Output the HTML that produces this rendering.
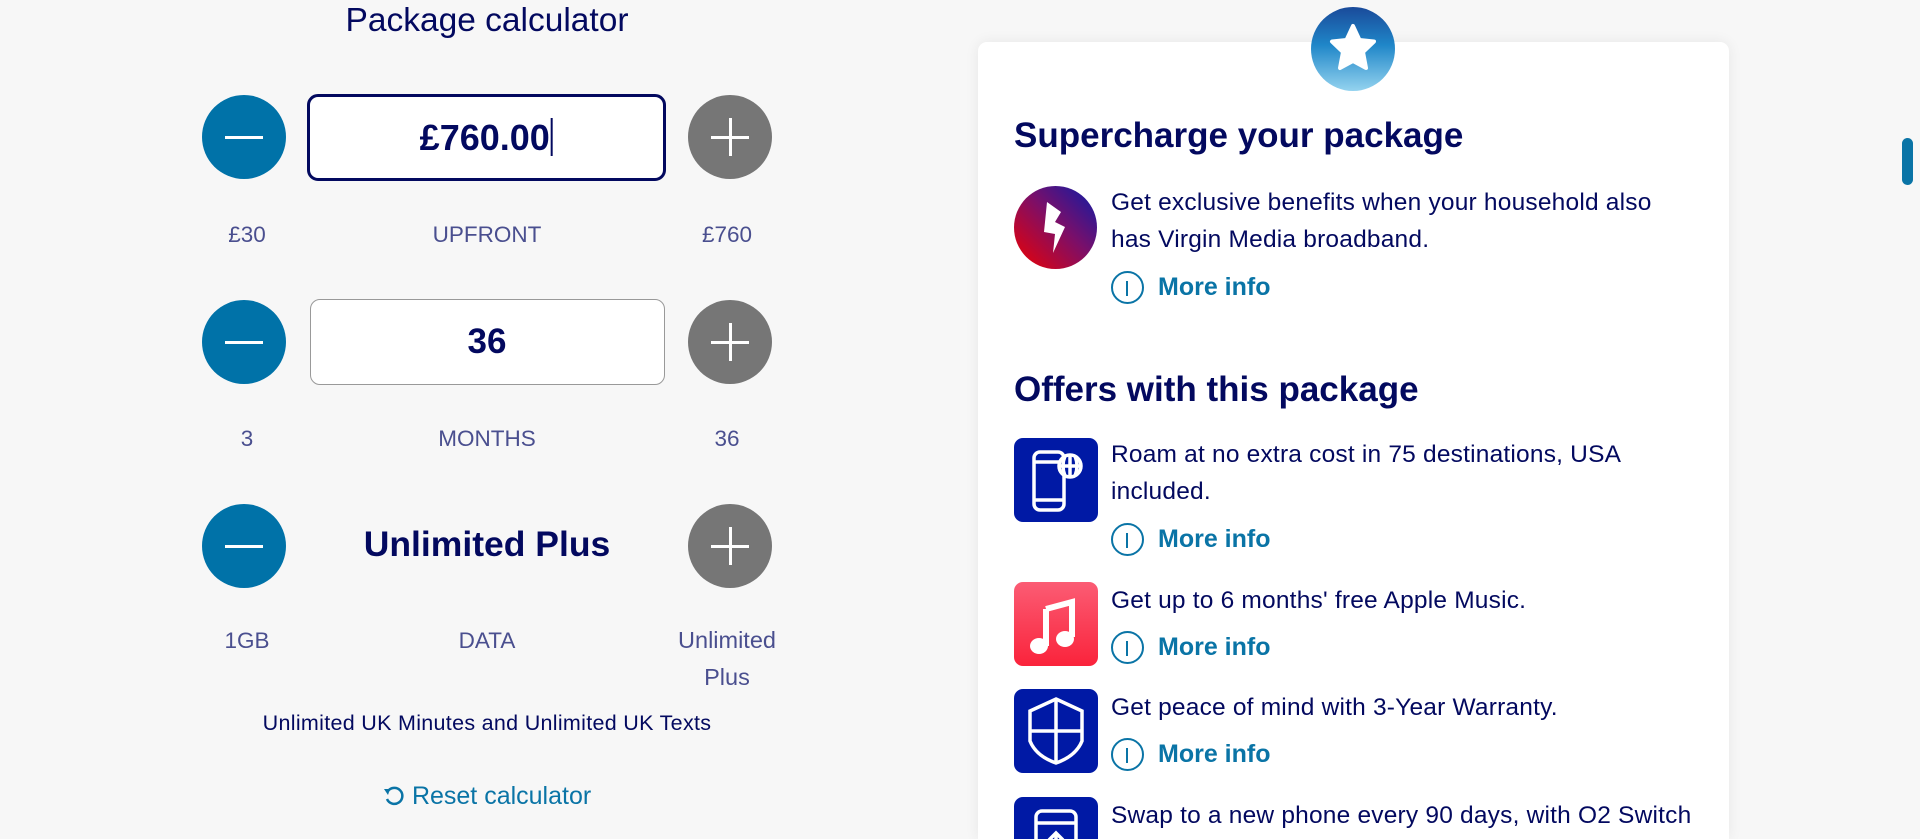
<!DOCTYPE html>
<html><head><meta charset="utf-8"><style>
*{margin:0;padding:0;box-sizing:border-box}
html{width:1920px;height:839px;overflow:hidden}
body{width:1920px;height:839px;background:#f7f7f7;position:relative;overflow:hidden;font-family:"Liberation Sans",sans-serif;color:#03095f}
.a{position:absolute}
.c{text-align:center;transform:translateX(-50%);white-space:nowrap}
.btn{position:absolute;width:84px;height:84px;border-radius:50%}
.minus{background:#0072a8}
.plus{background:#767676}
.btn:before{content:"";position:absolute;left:23px;top:41px;width:38px;height:3px;background:#fff}
.plus:after{content:"";position:absolute;left:41px;top:23px;width:3px;height:38px;background:#fff}
.lbl{font-size:22.5px;color:#4a4f8f}
.card{left:978px;top:42px;width:751px;height:797px;background:#fff;border-radius:9px 9px 0 0;box-shadow:0 0 14px rgba(0,0,0,0.07)}
h2{position:absolute;font-size:35px;font-weight:bold;white-space:nowrap}
.t{position:absolute;left:1111px;font-size:24.5px;line-height:36.5px;letter-spacing:0.2px;white-space:nowrap}
.mi{position:absolute;left:1111px;height:34px;font-size:25px;font-weight:bold;color:#0a74a6;white-space:nowrap}
.mi i{position:absolute;left:0;top:0;width:33px;height:33px;border:2.5px solid #0a74a6;border-radius:50%}
.mi i:after{content:"";position:absolute;left:12.5px;top:8px;width:2.5px;height:15px;background:#0a74a6}
.mi span{position:absolute;left:47px;top:2px}
.ic{position:absolute;left:1014px;width:84px;height:84px;border-radius:9px;background:#0019a5;overflow:hidden}
</style></head><body>
<div class="a c" style="left:487px;top:2px;font-size:33.5px;font-weight:300">Package calculator</div>

<div class="btn minus" style="left:202px;top:95px"></div>
<div class="a" style="left:307px;top:94px;width:359px;height:87px;border:3px solid #03095f;border-radius:11px;background:#fff"></div>
<div class="a c" style="left:486px;top:117px;font-size:36px;font-weight:bold">£760.00<span style="display:inline-block;width:1.5px;height:38px;background:#03095f;vertical-align:-6px;margin-left:1px"></span></div>
<div class="btn plus" style="left:688px;top:95px"></div>
<div class="a c lbl" style="left:247px;top:222px">£30</div>
<div class="a c lbl" style="left:487px;top:222px">UPFRONT</div>
<div class="a c lbl" style="left:727px;top:222px">£760</div>

<div class="btn minus" style="left:202px;top:300px"></div>
<div class="a" style="left:310px;top:299px;width:355px;height:86px;border:1px solid #999;border-radius:10px;background:#fff"></div>
<div class="a c" style="left:487px;top:322px;font-size:35px;font-weight:bold">36</div>
<div class="btn plus" style="left:688px;top:300px"></div>
<div class="a c lbl" style="left:247px;top:426px">3</div>
<div class="a c lbl" style="left:487px;top:426px">MONTHS</div>
<div class="a c lbl" style="left:727px;top:426px">36</div>

<div class="btn minus" style="left:202px;top:504px"></div>
<div class="a c" style="left:487px;top:524px;font-size:35.5px;font-weight:bold">Unlimited Plus</div>
<div class="btn plus" style="left:688px;top:504px"></div>
<div class="a c lbl" style="left:247px;top:628px">1GB</div>
<div class="a c lbl" style="left:487px;top:628px">DATA</div>
<div class="a c lbl" style="left:727px;line-height:37px;top:622px;font-size:23.5px">Unlimited<br>Plus</div>
<div class="a c" style="left:487px;top:711px;font-size:21.5px;letter-spacing:0.3px">Unlimited UK Minutes and Unlimited UK Texts</div>
<div class="a" style="left:383px;top:782px;font-size:25px;color:#0a74a6;white-space:nowrap">
<svg width="22" height="22" viewBox="0 0 22 22" style="vertical-align:-3px"><path d="M5 6 A8 8 0 1 1 4 14" fill="none" stroke="#0a74a6" stroke-width="2.5"/><path d="M1 4 L7 4 L5 10 Z" fill="#0a74a6"/></svg> Reset calculator</div>

<div class="a card"></div>
<div class="a" style="left:1311px;top:7px;width:84px;height:84px;border-radius:50%;background:linear-gradient(#1a4a9a,#1f86c8 45%,#94d3ef)">
<svg width="84" height="84" viewBox="0 0 84 84"><path d="M42 19 L48.5 33 L63 34.5 L52 45 L55 61 L42 54 L29 61 L32 45 L21 34.5 L35.5 33 Z" fill="#fff" stroke="#fff" stroke-width="4" stroke-linejoin="round"/></svg></div>

<h2 style="left:1014px;top:116px">Supercharge your package</h2>
<div class="a" style="left:1014px;top:186px;width:83px;height:83px;border-radius:50%;background:linear-gradient(45deg,#f00000,#7a0f6a 55%,#0a1ca8)">
<svg width="83" height="83" viewBox="0 0 83 83"><path d="M33 16 L47 26 L41 36 L51 41 L39 67 L41 48 L30 46 Z" fill="#fff"/></svg></div>
<div class="t" style="top:185px">Get exclusive benefits when your household also<br>has Virgin Media broadband.</div>
<div class="mi" style="top:271px"><i></i><span>More info</span></div>

<h2 style="left:1014px;top:370px">Offers with this package</h2>
<div class="ic" style="top:438px"><svg width="84" height="84" viewBox="0 0 84 84" fill="none" stroke="#fff" stroke-width="3.5"><rect x="20" y="14" width="30" height="58" rx="6"/><path d="M20 24 H50 M20 62 H50"/><circle cx="56" cy="28" r="11" fill="#0019a5"/><path d="M45 28 H67 M56 17 V39 M51 18 Q47 28 51 38 M61 18 Q65 28 61 38"/></svg></div>
<div class="t" style="top:437px">Roam at no extra cost in 75 destinations, USA<br>included.</div>
<div class="mi" style="top:523px"><i></i><span>More info</span></div>

<div class="ic" style="top:582px;background:linear-gradient(#fb5c74,#fa233b)"><svg width="84" height="84" viewBox="0 0 84 84"><path d="M32 27 L58 20 L58 55" fill="none" stroke="#fff" stroke-width="6"/><path d="M32 27 V64" stroke="#fff" stroke-width="6"/><ellipse cx="25" cy="64" rx="9" ry="8" fill="#fff"/><ellipse cx="51" cy="57" rx="9" ry="8" fill="#fff"/></svg></div>
<div class="t" style="top:583px">Get up to 6 months' free Apple Music.</div>
<div class="mi" style="top:631px"><i></i><span>More info</span></div>

<div class="ic" style="top:689px"><svg width="84" height="84" viewBox="0 0 84 84" fill="none" stroke="#fff" stroke-width="3.5"><path d="M42 10 L68 22 V52 Q62 67 42 74 Q22 67 16 52 V22 Z"/><path d="M42 10 V74 M16 42 H68"/></svg></div>
<div class="t" style="top:690px">Get peace of mind with 3-Year Warranty.</div>
<div class="mi" style="top:738px"><i></i><span>More info</span></div>

<div class="ic" style="top:797px;height:42px;border-radius:9px 9px 0 0"><svg width="84" height="42" viewBox="0 0 84 42" fill="none" stroke="#fff" stroke-width="3.5"><rect x="22" y="14" width="40" height="60" rx="6"/><path d="M22 26 H62 M42 56 V36 M35 43 L42 36 L49 43"/></svg></div>
<div class="t" style="top:798px;height:41px;overflow:hidden">Swap to a new phone every 90 days, with O2 Switch</div>

<div class="a" style="left:1902px;top:138px;width:11px;height:47px;border-radius:6px;background:#0a74a6"></div>
</body></html>
